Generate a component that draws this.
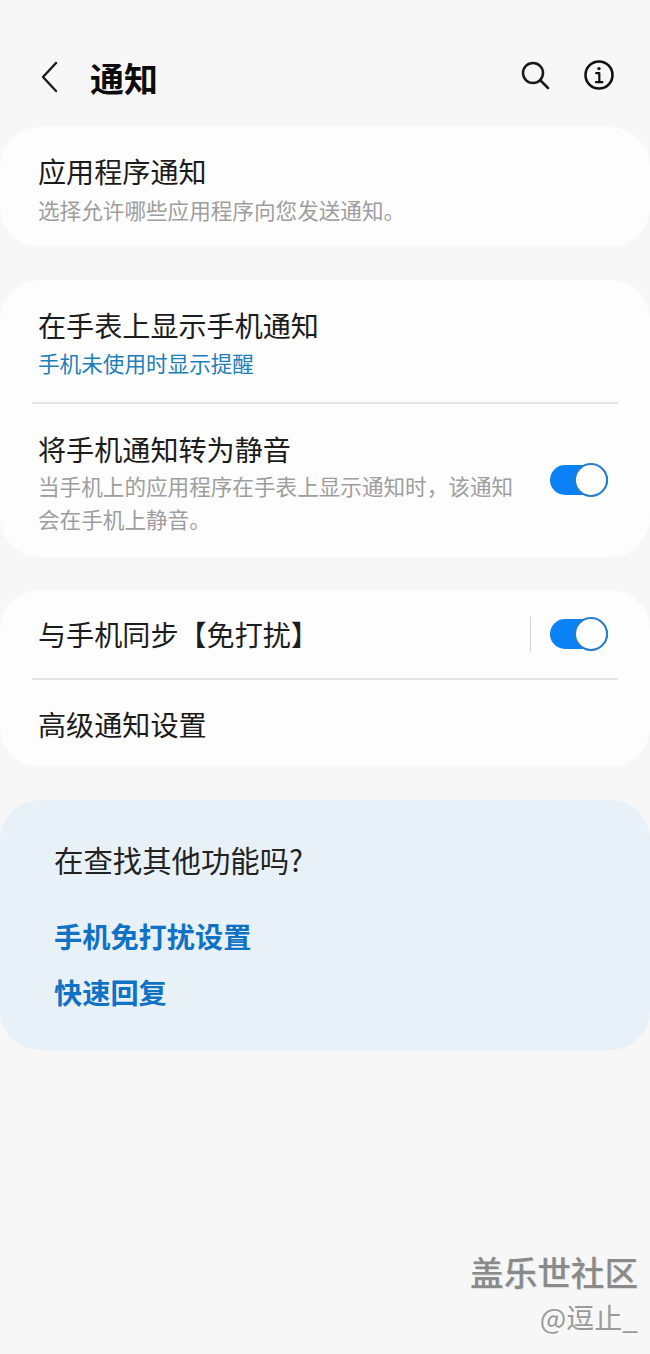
<svelte:options runes />
<script lang="ts">
  // Watch notification settings page
</script>

<div class="page">
  <header class="top">
    <button class="icon-btn back" aria-label="返回">
      <svg viewBox="0 0 20 34" width="20" height="34" fill="none" stroke="#1a1a1a" stroke-width="2.4" stroke-linecap="round" stroke-linejoin="round">
        <path d="M17 3 4 17l13 14" />
      </svg>
    </button>
    <h1>通知</h1>
    <div class="actions">
      <button class="icon-btn" aria-label="搜索">
        <svg viewBox="0 0 30 30" width="30" height="30" fill="none" stroke="#1a1a1a" stroke-width="2.5" stroke-linecap="round">
          <circle cx="13" cy="13" r="10" />
          <path d="m20.5 20.5 7.5 7.5" />
        </svg>
      </button>
      <button class="icon-btn" aria-label="信息">
        <svg viewBox="0 0 30 30" width="30" height="30" fill="none" stroke="#111" stroke-width="2.6" stroke-linecap="round" stroke-linejoin="round">
          <circle cx="15" cy="15" r="13.5" />
          <path d="M12.2 13.2H15.3V22M12 22.2h6.4" stroke-width="2.2" />
          <circle cx="15" cy="8.6" r="1.7" fill="#111" stroke="none" />
        </svg>
      </button>
    </div>
  </header>

  <section class="card c1">
    <div class="row">
      <div class="main">
        <div class="title">应用程序通知</div>
        <div class="sub">选择允许哪些应用程序向您发送通知。</div>
      </div>
    </div>
  </section>

  <section class="card c2">
    <div class="row r-watch">
      <div class="main">
        <div class="title">在手表上显示手机通知</div>
        <div class="sub link">手机未使用时显示提醒</div>
      </div>
    </div>
    <div class="divider"></div>
    <div class="row r-mute">
      <div class="main narrow">
        <div class="title">将手机通知转为静音</div>
        <div class="sub wrap">当手机上的应用程序在手表上显示通知时，该通知会在手机上静音。</div>
      </div>
      <span class="switch" aria-hidden="true"><span class="knob"></span></span>
    </div>
  </section>

  <section class="card c3">
    <div class="row r-sync">
      <div class="title grow">与手机同步【免打扰】</div>
      <span class="vline"></span>
      <span class="switch" aria-hidden="true"><span class="knob"></span></span>
    </div>
    <div class="divider"></div>
    <div class="row r-adv">
      <div class="title">高级通知设置</div>
    </div>
  </section>

  <section class="card more">
    <div class="more-title">在查找其他功能吗?</div>
    <div class="more-links">
      <div class="more-link">手机免打扰设置</div>
      <div class="more-link">快速回复</div>
    </div>
  </section>

  <div class="mark">
    <div class="mark-name">盖乐世社区</div>
    <div class="mark-user">@逗止_</div>
  </div>
</div>

<style>
  :global(body) {
    margin: 0;
    background: #f7f7f7;
  }
  .page {
    position: relative;
    width: 650px;
    height: 1354px;
    overflow: hidden;
    background: #f7f7f7;
    font-family: "Noto Sans CJK SC", "Liberation Sans", sans-serif;
    color: #1c1c1c;
  }
  .top {
    display: flex;
    align-items: center;
    height: 127px;
    padding: 26px 36px 0 39px;
    box-sizing: border-box;
  }
  .icon-btn {
    display: flex;
    padding: 0;
    border: none;
    background: none;
  }
  .back {
    margin-right: 31px;
    margin-top: 1px;
  }
  h1 {
    margin: 0 0 -2px;
    font-size: 34px;
    font-weight: 700;
    line-height: 1;
    color: #0c0c0c;
  }
  .actions {
    display: flex;
    gap: 34px;
    margin-left: auto;
    margin-top: -4px;
  }
  .card {
    background: #fdfdfd;
    border-radius: 40px;
    margin-bottom: 33px;
  }
  .c1 {
    height: 120px;
    display: flex;
    align-items: center;
  }
  .c1 .main {
    padding-top: 4px;
  }
  .row {
    display: flex;
    align-items: center;
    padding: 0 42px 0 38px;
    box-sizing: border-box;
    width: 100%;
  }
  .title {
    font-size: 28.1px;
    line-height: 38px;
    white-space: nowrap;
    color: #1c1c1c;
  }
  .sub {
    margin-top: 3px;
    font-size: 21.6px;
    line-height: 33px;
    color: #9e9e9e;
  }
  .sub.link {
    color: #1d7fb8;
    margin-top: 2px;
  }
  .main.narrow {
    width: 490px;
    padding-top: 3px;
    box-sizing: border-box;
  }
  .grow {
    flex: 1;
  }
  .r-watch {
    height: 122px;
  }
  .r-watch .main {
    padding-top: 3px;
  }
  .r-mute {
    height: 153px;
    justify-content: space-between;
  }
  .r-mute .sub {
    margin-top: 1px;
  }
  .r-mute .switch {
    margin-bottom: 1px;
  }
  .divider {
    height: 2px;
    margin: 0 32px;
    background: #e4e4e4;
  }
  .r-sync {
    height: 88px;
  }
  .r-adv {
    height: 87px;
  }
  .vline {
    width: 1px;
    height: 35px;
    margin-right: 19px;
    background: #d6d6d6;
  }
  .switch {
    position: relative;
    display: block;
    flex-shrink: 0;
    width: 58px;
    height: 30px;
    border-radius: 15px;
    background: #0a82f5;
  }
  .knob {
    position: absolute;
    top: -2px;
    right: 0;
    width: 34px;
    height: 34px;
    box-sizing: border-box;
    border: 2px solid #2a7cc8;
    border-radius: 50%;
    background: #fff;
  }
  .more {
    height: 250px;
    margin: 0;
    padding: 39px 54px 0;
    box-sizing: border-box;
    background: #e8f0f8;
  }
  .more-title {
    font-size: 29.4px;
    line-height: 40px;
    white-space: nowrap;
    color: #222;
  }
  .more-links {
    display: flex;
    flex-direction: column;
    gap: 16px;
    margin-top: 37px;
  }
  .more-link {
    font-size: 28.2px;
    line-height: 40px;
    font-weight: 600;
    color: #0f72c4;
  }
  .mark {
    position: absolute;
    right: 12px;
    top: 1252px;
    text-align: right;
    color: #8c8c8c;
  }
  .mark-name {
    font-size: 33.6px;
    line-height: 40px;
    font-weight: 500;
    color: #8a8a8a;
    text-shadow: 1px 1px 0 #ddd;
  }
  .mark-user {
    margin-top: 7px;
    font-size: 28px;
    line-height: 36px;
    color: #9a9a9a;
  }
</style>
